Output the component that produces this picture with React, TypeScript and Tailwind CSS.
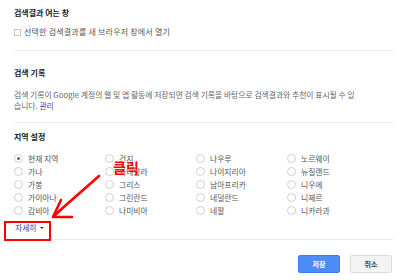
import React from 'react';

const regions = [
  '현재 지역', '건지', '나우루', '노르웨이',
  '가나', '과테말라', '나이지리아', '뉴질랜드',
  '가봉', '그리스', '남아프리카', '니우에',
  '가이아나', '그린란드', '네덜란드', '니제르',
  '감비아', '나미비아', '네팔', '니카라과',
];

const App: React.FC = () => {
  return (
    <div
      className="relative w-[400px] h-[280px] bg-white pl-[14px] pr-[7px] overflow-hidden text-[#444]"
      style={{ fontFamily: '"Noto Sans CJK KR", "Noto Sans", sans-serif' }}
    >
      {/* search results window */}
      <div className="h-[51px] border-b border-[#ebebeb] pt-[7px]">
        <div className="h-[12px] leading-[12px] text-[8px] font-bold text-[#222]">검색결과 여는 창</div>
        <label className="mt-[7px] flex items-center gap-[3px] h-[12px] text-[8px] tracking-[0.2px] text-[#555]">
          <span className="w-[7px] h-[7px] border border-[#c6c6c6] bg-white" />
          선택한 검색결과를 새 브라우저 창에서 열기
        </label>
      </div>

      {/* history */}
      <div className="h-[72px] border-b border-[#ebebeb] pt-[16px]">
        <div className="h-[12px] leading-[12px] text-[8px] font-bold text-[#222]">검색 기록</div>
        <p className="mt-[10px] text-[7.8px] leading-[11px] text-[#666] whitespace-nowrap">
          검색 기록이 Google 계정의 웹 및 앱 활동에 저장되면 검색 기록을 바탕으로 검색결과와 추천이 표시될 수 있
          <br />
          습니다. <span className="text-[#4b35c4]">관리</span>
        </p>
      </div>

      {/* region */}
      <div className="h-[117px] border-b border-[#ebebeb] pt-[8px]">
        <div className="h-[12px] leading-[12px] text-[8px] font-bold text-[#222]">지역 설정</div>
        <div className="mt-[9px] grid grid-cols-[91px_91px_91px_91px]">
          {regions.map((name, i) => (
            <div key={name} className="h-[13px] flex items-center gap-[5px] text-[7.8px] text-[#555]">
              <span className="w-[9px] h-[9px] rounded-full border border-[#d0d0d0] flex items-center justify-center">
                {i === 0 && <span className="w-[3px] h-[3px] rounded-full bg-[#666]" />}
              </span>
              {name}
            </div>
          ))}
        </div>
        <div className="mt-[5px] h-[12px] leading-[12px] pl-[1px] text-[7.8px] text-[#1a3fc4] flex items-center gap-[3px]">
          자세히
          <span className="w-0 h-0 border-l-[2px] border-r-[2px] border-t-[2px] border-l-transparent border-r-transparent border-t-[#1a3fc4]" />
        </div>
      </div>

      {/* buttons */}
      <div className="mt-[15px] flex justify-end gap-[10px] pr-[1px]">
        <button className="w-[42px] h-[18px] rounded-[2px] bg-[#4d8ef5] border border-[#3b7ce9] text-white text-[7px] font-bold">
          저장
        </button>
        <button className="w-[42px] h-[18px] rounded-[2px] bg-[#f3f3f3] border border-[#dadada] text-[#444] text-[7px] font-bold">
          취소
        </button>
      </div>

      {/* annotation overlay */}
      <div className="absolute left-[4px] top-[221px] w-[47px] h-[20px] border-2 border-[#ff0000]" />
      <div className="absolute left-[113px] top-[160px] text-[14px] leading-none font-bold text-[#ff0000]">클릭</div>
      <svg className="absolute left-0 top-0" width="400" height="280" viewBox="0 0 400 280" fill="none">
        <path
          d="M99 176 L82 191 L66 205 L54 216"
          stroke="#ff0000"
          strokeWidth="2.6"
          strokeLinecap="round"
          strokeLinejoin="round"
        />
        <path
          d="M61 200 L53 217 L72 217"
          stroke="#ff0000"
          strokeWidth="2.6"
          strokeLinecap="round"
          strokeLinejoin="round"
        />
      </svg>
    </div>
  );
};

export default App;
